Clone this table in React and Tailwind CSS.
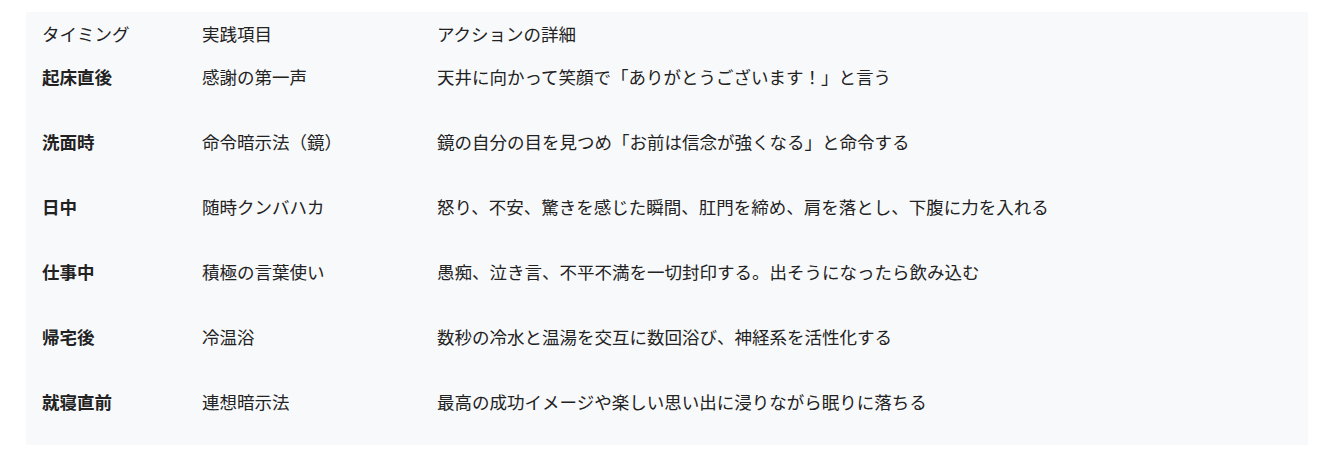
const rows = [
  ['起床直後', '感謝の第一声', '天井に向かって笑顔で「ありがとうございます！」と言う'],
  ['洗面時', '命令暗示法（鏡）', '鏡の自分の目を見つめ「お前は信念が強くなる」と命令する'],
  ['日中', '随時クンバハカ', '怒り、不安、驚きを感じた瞬間、肛門を締め、肩を落とし、下腹に力を入れる'],
  ['仕事中', '積極の言葉使い', '愚痴、泣き言、不平不満を一切封印する。出そうになったら飲み込む'],
  ['帰宅後', '冷温浴', '数秒の冷水と温湯を交互に数回浴び、神経系を活性化する'],
  ['就寝直前', '連想暗示法', '最高の成功イメージや楽しい思い出に浸りながら眠りに落ちる'],
];

export default function App() {
  return (
    <div
      className="w-[1342px] h-[452px] bg-white pt-[12px] pl-[26px]"
      style={{ fontFamily: '"Noto Sans CJK JP", "Noto Sans", sans-serif' }}
    >
      <div className="w-[1282px] h-[433px] bg-[#f8f9fb] pl-[16px] pt-[9px] text-[17.5px] text-[#222]">
        <div className="grid grid-cols-[160px_235px_1fr] h-[24px] items-center">
          <div>タイミング</div>
          <div>実践項目</div>
          <div>アクションの詳細</div>
        </div>
        {rows.map(([time, item, detail]) => (
          <div key={time} className="grid grid-cols-[160px_235px_1fr] h-[65px] items-center">
            <div className="font-bold">{time}</div>
            <div>{item}</div>
            <div>{detail}</div>
          </div>
        ))}
      </div>
    </div>
  );
}
